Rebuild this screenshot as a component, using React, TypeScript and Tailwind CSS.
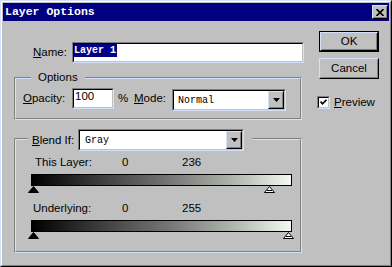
import React from "react";

function Sunken({
  className = "",
  innerClassName = "",
  children,
}: {
  className?: string;
  innerClassName?: string;
  children?: React.ReactNode;
}) {
  return (
    <div className={"border border-t-[#808080] border-l-[#808080] border-r-[#d4e0fc] border-b-[#d4e0fc] " + className}>
      <div className={"h-full border border-t-black border-l-black border-r-[#c0c0c0] border-b-[#c0c0c0] bg-white " + innerClassName}>
        {children}
      </div>
    </div>
  );
}

function Raised({
  className = "",
  innerClassName = "",
  children,
}: {
  className?: string;
  innerClassName?: string;
  children?: React.ReactNode;
}) {
  return (
    <div className={"border border-t-[#d4e0fc] border-l-[#d4e0fc] border-r-black border-b-black bg-[#c0c0c0] " + className}>
      <div className={"h-full border border-t-[#c0c0c0] border-l-[#c0c0c0] border-r-[#808080] border-b-[#808080] " + innerClassName}>
        {children}
      </div>
    </div>
  );
}

function Combo({ value, className = "", textClass = "" }: { value: string; className?: string; textClass?: string }) {
  return (
    <Sunken className={className} innerClassName="flex items-stretch">
      <div className={"flex-1 flex items-center font-['Liberation_Mono',monospace] text-[10px] " + textClass}>{value}</div>
      <Raised className="w-[16px]" innerClassName="flex items-center justify-center">
        <svg width="7" height="4" viewBox="0 0 7 4">
          <path d="M0 0 H7 L3.5 4 Z" fill="black" />
        </svg>
      </Raised>
    </Sunken>
  );
}

function Tri({ filled, left }: { filled: boolean; left: number }) {
  return (
    <svg
      width="11"
      height="7"
      viewBox="0 0 11 7"
      className="absolute top-[12px]"
      style={{ left }}
    >
      <polygon points="0.5,6.5 5.5,0.5 10.5,6.5" fill={filled ? "black" : "white"} stroke="black" strokeWidth="1" />
      {!filled && <path d="M3 4.5 H8" stroke="black" strokeWidth="1" />}
    </svg>
  );
}

function Track({ a, b }: { a: number; b: number }) {
  return (
    <div className="relative mt-[5px] ml-[15px] w-[261px] h-[19px]">
      <div className="h-[12px] border border-black bg-[linear-gradient(to_right,#000000_0%,#3a3a3a_25%,#7a7b79_55%,#b0b6ae_78%,#f4faf2_100%)]" />
      <Tri filled left={a - 3} />
      <Tri filled={false} left={b - 3} />
    </div>
  );
}

export default function App() {
  return (
    <div className="w-[392px] h-[267px] bg-[#c0c0c0] border border-t-[#d4e0fc] border-l-[#d4e0fc] border-r-black border-b-black font-['Liberation_Sans',Arial,sans-serif] text-[11.5px] leading-[13px] text-black select-none">
      <div className="h-full border border-t-white border-l-white border-r-[#808080] border-b-[#808080] p-px flex flex-col">
        {/* Title bar */}
        <div className="h-[18px] bg-[#000080] flex items-center pl-[2px] pr-[1px]">
          <span className="text-white font-bold font-['Liberation_Mono',monospace] text-[11.5px] leading-[14px]">
            Layer Options
          </span>
          <Raised className="ml-auto w-[16px] h-[14px]" innerClassName="flex items-center justify-center">
            <svg width="8" height="7" viewBox="0 0 8 7">
              <path d="M0.5 0 L7.5 7 M7.5 0 L0.5 7" stroke="black" strokeWidth="1.6" />
            </svg>
          </Raised>
        </div>

        {/* Body */}
        <div className="flex flex-1 pl-[11px]">
          {/* Left column */}
          <div className="w-[290px] flex flex-col">
            {/* Name */}
            <div className="mt-[21px] flex items-center h-[21px]">
              <span className="w-[58px] pl-[19px]">
                <span className="underline">N</span>ame:
              </span>
              <Sunken className="w-[232px] h-[21px]" innerClassName="flex items-start">
                <span className="bg-[#000080] text-white font-['Liberation_Mono',monospace] font-bold text-[10px] leading-[13px] pr-[1px]">
                  Layer 1
                </span>
              </Sunken>
            </div>

            {/* Options group */}
            <div className="relative mt-[14px] w-[288px] h-[43px] border border-t-[#808080] border-l-[#808080] border-r-[#d4e0fc] border-b-[#d4e0fc]">
              <div className="h-full border border-t-[#d4e0fc] border-l-[#d4e0fc] border-r-[#808080] border-b-[#808080] pl-[7px] pt-[9px]">
                <div className="flex items-center h-[21px]">
                  <span className="w-[49px]">
                    <span className="underline">O</span>pacity:
                  </span>
                  <Sunken className="w-[42px] h-[21px]" innerClassName="pl-[1px]">
                    100
                  </Sunken>
                  <span className="w-[20px] pl-[4px]">%</span>
                  <span className="w-[38px]">
                    <span className="underline">M</span>ode:
                  </span>
                  <Combo value="Normal" className="w-[114px] h-[22px] self-start mt-[1px]" textClass="pl-[4px]" />
                </div>
              </div>
              <div className="absolute left-[16px] top-[-7px] h-[13px] px-[7px] bg-[#c0c0c0]">Options</div>
            </div>

            {/* Blend If group */}
            <div className="relative mt-[18px] w-[288px] h-[115px] border border-t-[#808080] border-l-[#808080] border-r-[#d4e0fc] border-b-[#d4e0fc]">
              <div className="h-full border border-t-[#d4e0fc] border-l-[#d4e0fc] border-r-[#808080] border-b-[#808080] flex flex-col">
                <div className="mt-[16px] h-[13px] flex">
                  <span className="w-[106px] pl-[19px]">This Layer:</span>
                  <span className="w-[60px]">0</span>
                  <span>236</span>
                </div>
                <Track a={0} b={236} />
                <div className="mt-[9px] h-[13px] flex">
                  <span className="w-[106px] pl-[17px]">Underlying:</span>
                  <span className="w-[60px]">0</span>
                  <span>255</span>
                </div>
                <Track a={0} b={255} />
              </div>
              <div className="absolute left-[13px] top-[-10px] h-[22px] flex items-center pl-[4px] pr-[8px] bg-[#c0c0c0]">
                <span className="w-[46px]">
                  <span className="underline">B</span>lend If:
                </span>
                <Combo value="Gray" className="w-[166px] h-[22px]" textClass="pl-[5px]" />
              </div>
            </div>
          </div>

          {/* Right column */}
          <div className="ml-[13px] flex flex-col">
            <div className="ml-[2px] mt-[10px] w-[60px] h-[21px] border border-black">
              <Raised className="h-full" innerClassName="flex items-center justify-center">
                OK
              </Raised>
            </div>
            <Raised className="ml-[2px] mt-[6px] w-[60px] h-[21px]" innerClassName="flex items-center justify-center">
              Cancel
            </Raised>
            <div className="mt-[17px] flex items-center">
              <Sunken className="w-[13px] h-[13px]" innerClassName="flex items-center justify-center">
                <svg width="7" height="7" viewBox="0 0 7 7">
                  <path d="M0.5 2.5 L2.5 4.8 L6.5 0.8" stroke="black" strokeWidth="1.8" fill="none" />
                </svg>
              </Sunken>
              <span className="ml-[4px]">
                <span className="underline">P</span>review
              </span>
            </div>
          </div>
        </div>
      </div>
    </div>
  );
}
